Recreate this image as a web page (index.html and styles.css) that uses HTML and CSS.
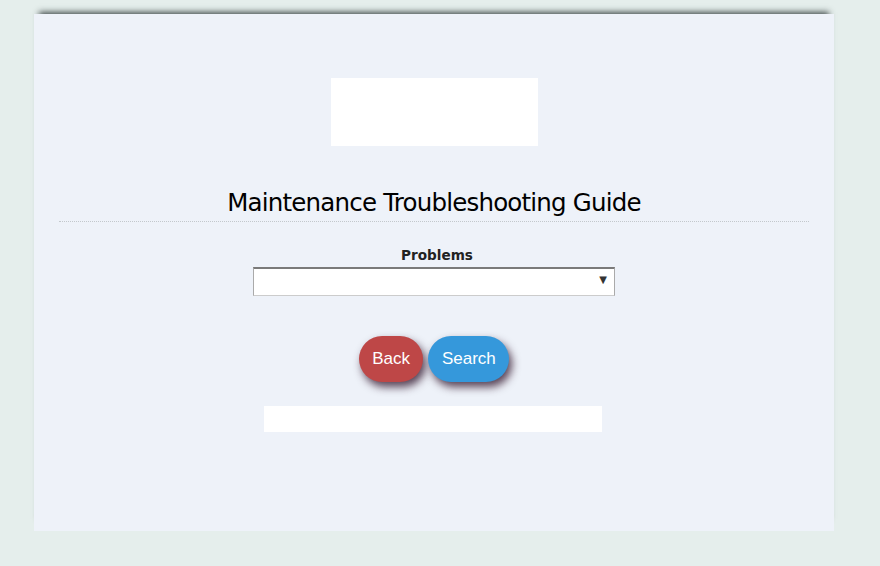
FILE: index.html
```html
<!DOCTYPE html>
<html>
<head>
<meta charset="utf-8">
<link rel="stylesheet" href="styles.css">
</head>
<body>
<div class="card">
  <div class="logo"></div>
  <h1 class="title">Maintenance Troubleshooting Guide</h1>
  <div class="field">
    <label class="label">Problems</label>
    <div class="select-wrap">
      <select class="select"><option></option></select>
      <span class="arrow">&#9660;</span>
    </div>
  </div>
  <div class="actions">
    <button class="btn btn-back">Back</button>
    <button class="btn btn-search">Search</button>
  </div>
  <div class="result"></div>
</div>
</body>
</html>
```
FILE: styles.css
```css
html, body {
  margin: 0;
  padding: 0;
  background: #e5eeec;
}
body {
  padding: 14px 0 35px 34px;
  font-family: "DejaVu Sans", Verdana, sans-serif;
}
.card {
  width: 800px;
  height: 517px;
  box-sizing: border-box;
  background: #eef2f9;
  box-shadow: 0 -7px 6px -5px rgba(50, 60, 60, 0.9);
  display: flex;
  flex-direction: column;
  align-items: center;
  padding-top: 64px;
}
.logo {
  width: 207px;
  height: 68px;
  background: #fff;
}
.title {
  margin: 42px 25px 0 25px;
  align-self: stretch;
  text-align: center;
  font-weight: normal;
  font-size: 24.5px;
  letter-spacing: -0.8px;
  line-height: 30px;
  color: #000;
  padding-bottom: 3px;
  border-bottom: 1px dotted #c3c8cc;
}
.field {
  margin-top: 24px;
  display: flex;
  flex-direction: column;
  align-items: center;
}
.label {
  font-weight: bold;
  font-size: 13.6px;
  line-height: 18px;
  color: #222;
  padding-left: 6px;
}
.select-wrap {
  position: relative;
  margin-top: 3px;
  width: 362px;
  height: 29px;
}
.select {
  -webkit-appearance: none;
  appearance: none;
  width: 100%;
  height: 100%;
  box-sizing: border-box;
  background: #fff;
  border: 1px solid #aaa;
  border-top: 2px solid #7a7a7a;
  border-bottom: 1px solid #ccc;
  border-radius: 0;
  margin: 0;
}
.arrow {
  position: absolute;
  right: 8px;
  top: 7px;
  font-size: 10px;
  color: #333;
  pointer-events: none;
}
.actions {
  margin-top: 40px;
  display: flex;
  gap: 5px;
}
.btn {
  height: 46px;
  border: none;
  border-radius: 23px;
  padding: 0 13.5px;
  font-family: "Liberation Sans", Arial, sans-serif;
  font-size: 17px;
  color: #fff;
  box-shadow: 3px 5px 8px rgba(50, 22, 45, 0.8);
}
.btn-back {
  background: #be4747;
}
.btn-search {
  background: #3598db;
}
.result {
  margin-top: 24px;
  margin-right: 2px;
  width: 338px;
  height: 26px;
  background: #fff;
}
```
